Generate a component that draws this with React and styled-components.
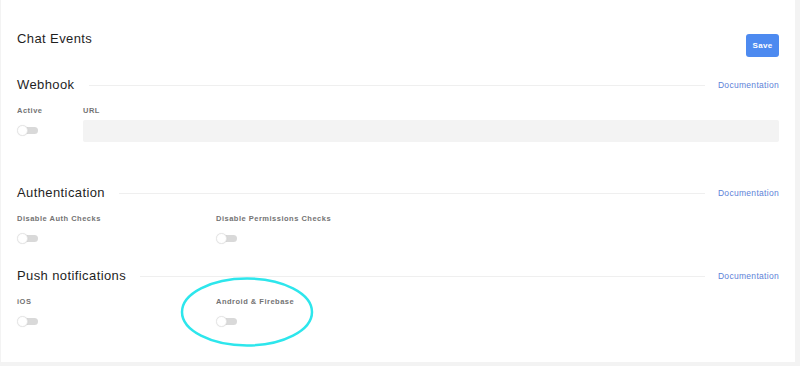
import React from "react";
import styled, { createGlobalStyle } from "styled-components";

const GlobalStyle = createGlobalStyle`
  html, body {
    margin: 0;
    padding: 0;
    background: #f3f3f3;
    font-family: "Liberation Sans", Arial, sans-serif;
  }
`;

const Page = styled.div`
  padding: 0 5px 4px 1px;
  width: 800px;
  height: 366px;
  box-sizing: border-box;
`;

const Panel = styled.div`
  position: relative;
  height: 362px;
  box-sizing: border-box;
  background: #ffffff;
  padding: 31px 16px 0 16px;
`;

const Header = styled.div`
  display: flex;
  justify-content: space-between;
  align-items: flex-start;
  height: 26px;
  margin-bottom: 20px;
`;

const Title = styled.h1`
  margin: 0;
  font-size: 13px;
  line-height: 16px;
  font-weight: 400;
  letter-spacing: 0.4px;
  color: #1f1f1f;
`;

const SaveButton = styled.button`
  margin-top: 3px;
  width: 33px;
  height: 23px;
  border: none;
  border-radius: 3px;
  background: #4d8af0;
  color: #ffffff;
  font-family: inherit;
  font-size: 8px;
  font-weight: 700;
  letter-spacing: 0.3px;
  padding: 0;
`;

const Section = styled.section`
  margin-bottom: ${(p) => p.$gap}px;
`;

const SectionHead = styled.div`
  display: flex;
  align-items: center;
  height: 16px;
  margin-bottom: 13px;
`;

const SectionTitle = styled.h2`
  margin: 0;
  font-size: 13px;
  line-height: 16px;
  font-weight: 400;
  letter-spacing: 0.4px;
  color: #1f1f1f;
  white-space: nowrap;
`;

const Rule = styled.div`
  flex: 1;
  height: 1px;
  background: #efefef;
  margin: 0 13px 0 14px;
`;

const DocLink = styled.a`
  font-size: 8.5px;
  letter-spacing: 0.3px;
  color: #5c82d8;
  text-decoration: none;
`;

const Fields = styled.div`
  display: grid;
  grid-template-columns: ${(p) => p.$cols};
`;

const Field = styled.div`
  display: flex;
  flex-direction: column;
`;

const Label = styled.label`
  font-size: 7.5px;
  line-height: 10px;
  font-weight: 700;
  letter-spacing: 0.5px;
  color: #737373;
  margin-bottom: ${(p) => (p.$input ? 4 : 9)}px;
  white-space: nowrap;
`;

const Toggle = styled.span`
  position: relative;
  display: block;
  width: 21px;
  height: 11px;
  &::before {
    content: "";
    position: absolute;
    left: 4px;
    right: 0;
    top: 2px;
    height: 7px;
    border-radius: 4px;
    background: #d9d9d9;
  }
  &::after {
    content: "";
    position: absolute;
    left: 0;
    top: 0;
    width: 11px;
    height: 11px;
    box-sizing: border-box;
    border-radius: 50%;
    background: #ffffff;
    border: 1px solid #e6e6e6;
    box-shadow: 0 0 1px rgba(0, 0, 0, 0.1);
  }
`;

const TextInput = styled.input`
  height: 22px;
  box-sizing: border-box;
  border: none;
  background: #f3f3f3;
  border-radius: 2px;
  padding: 0 8px;
  outline: none;
`;

const Annotation = styled.svg`
  position: absolute;
  left: 179px;
  top: 277px;
  overflow: visible;
`;

const SectionHeader = ({ title }) => (
  <SectionHead>
    <SectionTitle>{title}</SectionTitle>
    <Rule />
    <DocLink href="#">Documentation</DocLink>
  </SectionHead>
);

const ToggleField = ({ label }) => (
  <Field>
    <Label>{label}</Label>
    <Toggle />
  </Field>
);

export default function App() {
  return (
    <Page>
      <GlobalStyle />
      <Panel>
        <Header>
          <Title>Chat Events</Title>
          <SaveButton>Save</SaveButton>
        </Header>

        <Section $gap={43}>
          <SectionHeader title="Webhook" />
          <Fields $cols="66px 1fr">
            <ToggleField label="Active" />
            <Field>
              <Label $input>URL</Label>
              <TextInput />
            </Field>
          </Fields>
        </Section>

        <Section $gap={24}>
          <SectionHeader title="Authentication" />
          <Fields $cols="199px 1fr">
            <ToggleField label="Disable Auth Checks" />
            <ToggleField label="Disable Permissions Checks" />
          </Fields>
        </Section>

        <Section $gap={0}>
          <SectionHeader title="Push notifications" />
          <Fields $cols="199px 1fr">
            <ToggleField label="iOS" />
            <ToggleField label="Android & Firebase" />
          </Fields>
        </Section>

        <Annotation width="134" height="70" viewBox="0 0 134 70">
          <ellipse cx="67" cy="35" rx="65" ry="33.5" fill="none" stroke="#2de6ec" strokeWidth="2.5" />
        </Annotation>
      </Panel>
    </Page>
  );
}
